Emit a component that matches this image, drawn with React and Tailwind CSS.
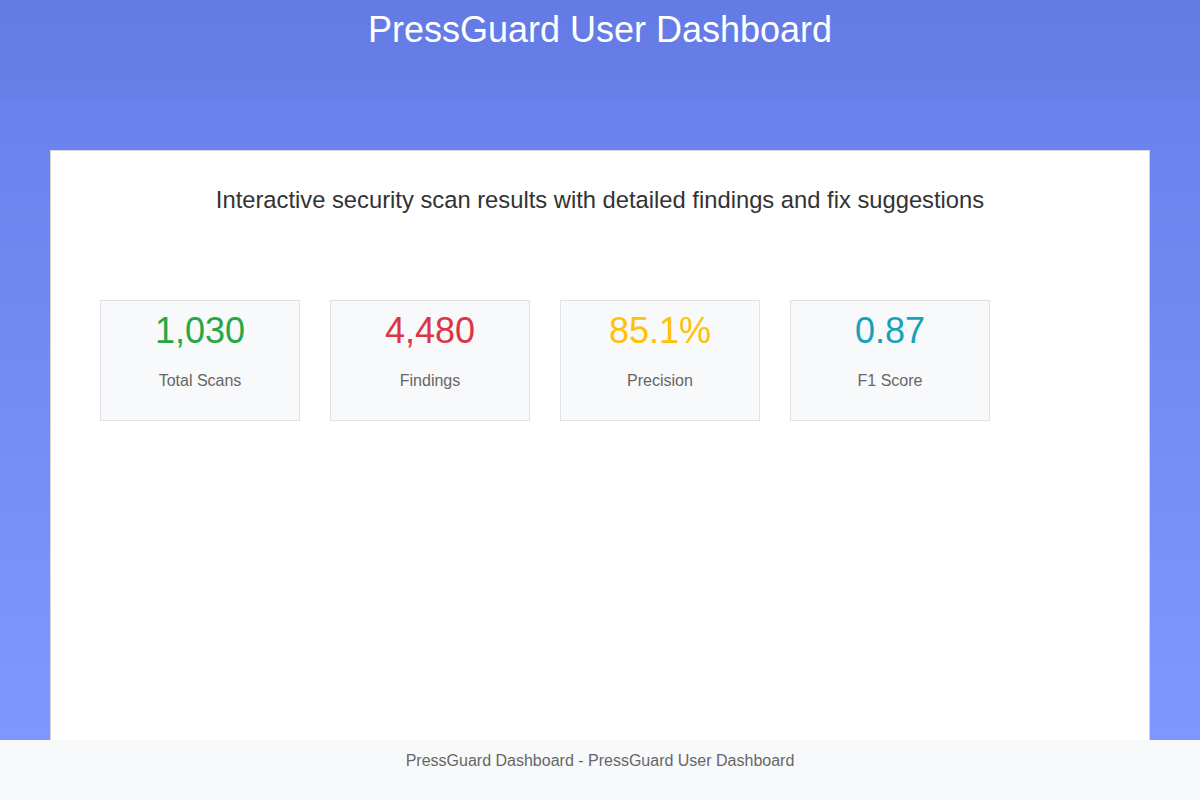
import React from 'react';

const stats = [
  { value: '1,030', label: 'Total Scans', color: 'text-[#28a745]' },
  { value: '4,480', label: 'Findings', color: 'text-[#dc3545]' },
  { value: '85.1%', label: 'Precision', color: 'text-[#ffc107]' },
  { value: '0.87', label: 'F1 Score', color: 'text-[#17a2b8]' },
];

export default function App() {
  return (
    <div
      className="min-h-screen bg-gradient-to-b from-[#667eea] to-[#8199ff] font-['Liberation_Sans',Arial,sans-serif]"
    >
      {/* Header */}
      <header className="h-[100px] bg-[#5f73d9]/20 text-center">
        <h1 className="pt-[9px] text-[36px] leading-[42px] text-white">PressGuard User Dashboard</h1>
      </header>

      {/* Main card */}
      <main className="px-[50px] pt-[50px]">
        <div className="min-h-[640px] border border-[#d4d4d4] bg-white px-[49px] pt-[35px]">
          <p className="text-center text-[23.75px] leading-[28px] text-[#333]">
            Interactive security scan results with detailed findings and fix suggestions
          </p>

          <div className="mt-[86px] flex flex-wrap gap-[30px]">
            {stats.map((s) => (
              <div
                key={s.label}
                className="h-[121px] w-[200px] border border-[#dee2e6] bg-[#f8f9fa] pt-[9px] text-center"
              >
                <div className={`text-[36px] leading-[42px] ${s.color}`}>{s.value}</div>
                <div className="mt-[20px] text-[16px] leading-[18px] text-[#666]">{s.label}</div>
              </div>
            ))}
          </div>
        </div>
      </main>

      {/* Footer */}
      <footer className="fixed bottom-0 left-0 right-0 h-[60px] bg-[#f8f9fa] pt-[12px] text-center text-[16px] leading-[18px] text-[#666]">
        PressGuard Dashboard - PressGuard User Dashboard
      </footer>
    </div>
  );
}
